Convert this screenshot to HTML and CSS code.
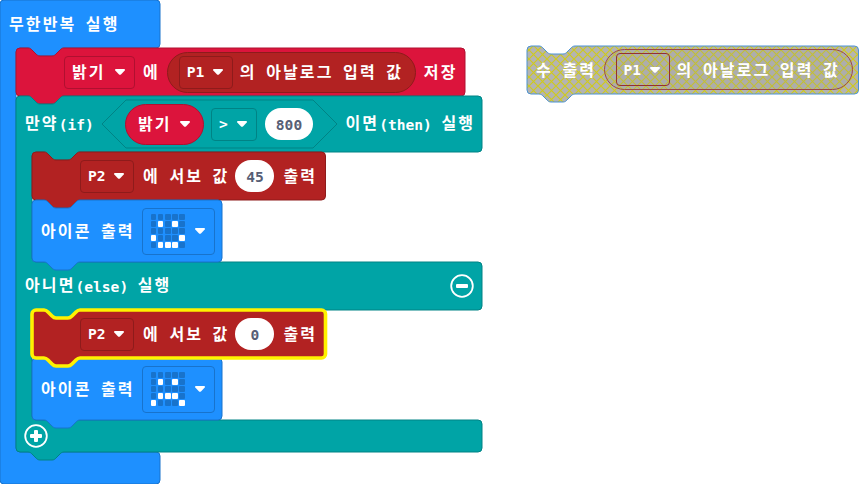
FILE: index.html
```
<!DOCTYPE html>
<html lang="ko">
<head>
<meta charset="utf-8">
<title>블록 편집기</title>
<link rel="stylesheet" href="styles.css">
</head>
<body>
<svg class="defs" width="0" height="0">
  <defs>
    <pattern id="hatch" width="9" height="9" patternUnits="userSpaceOnUse" x="2" y="4">
      <rect width="9" height="9" fill="#b4b4b2"/>
      <path d="M-1 -1L10 10M10 -1L-1 10" stroke="#cfca1c" stroke-width="1.2"/>
    </pattern>
    <symbol id="arrow" viewBox="0 0 12 8"><path d="M1.8 1h8.4q1.400 .2.5 1.500L7.200 6.300q-1.200 1-2.400 0L1.300 2.500Q.4 1.200 1.800 1z" fill="#fff"/></symbol>
  </defs>
</svg>
<main class="workspace">
  <section class="block forever">
    <svg class="shape loop" width="160" height="484"><path d="M0 4A4 4 0 0 1 4 0H156a4 4 0 0 1 4 4V44a4 4 0 0 1-4 4H64c-2 0-3 1-4 2l-4 4c-1 1-2 2-4 2H40c-2 0-3-1-4-2l-4-4c-1-1-2-2-4-2H20a4 4 0 0 0-4 4V448a4 4 0 0 0 4 4H156a4 4 0 0 1 4 4V480a4 4 0 0 1-4 4H4a4 4 0 0 1-4-4z"/></svg>
    <div class="row"><span class="t">무한반복 실행</span></div>
    <div class="stack">

      <div class="block">
        <svg class="shape variable" width="449" height="56"><path d="M0 4A4 4 0 0 1 4 0H12c2 0 3 1 4 2l4 4c1 1 2 2 4 2H36c2 0 3-1 4-2l4-4c1-1 2-2 4-2H445a4 4 0 0 1 4 4V44a4 4 0 0 1-4 4H48c-2 0-3 1-4 2l-4 4c-1 1-2 2-4 2H24c-2 0-3-1-4-2l-4-4c-1-1-2-2-4-2H4a4 4 0 0 1-4-4z"/></svg>
        <div class="row set">
          <span class="field var"><span class="t">밝기</span><svg class="arrow"><use href="#arrow"/></svg></span>
          <span class="t">에</span>
          <span class="reporter pin">
            <span class="field pick"><span class="l">P1</span><svg class="arrow"><use href="#arrow"/></svg></span>
            <span class="t">의 아날로그 입력 값</span>
          </span>
          <span class="t">저장</span>
        </div>
      </div>

      <div class="block">
        <svg class="shape logic" width="467" height="364"><path d="M0 4A4 4 0 0 1 4 0H12c2 0 3 1 4 2l4 4c1 1 2 2 4 2H36c2 0 3-1 4-2l4-4c1-1 2-2 4-2H462a4 4 0 0 1 4 4V52a4 4 0 0 1-4 4H64c-2 0-3 1-4 2l-4 4c-1 1-2 2-4 2H40c-2 0-3-1-4-2l-4-4c-1-1-2-2-4-2H20a4 4 0 0 0-4 4V162a4 4 0 0 0 4 4H462a4 4 0 0 1 4 4V210a4 4 0 0 1-4 4H64c-2 0-3 1-4 2l-4 4c-1 1-2 2-4 2H40c-2 0-3-1-4-2l-4-4c-1-1-2-2-4-2H20a4 4 0 0 0-4 4V320a4 4 0 0 0 4 4H462a4 4 0 0 1 4 4V352a4 4 0 0 1-4 4H48c-2 0-3 1-4 2l-4 4c-1 1-2 2-4 2H24c-2 0-3-1-4-2l-4-4c-1-1-2-2-4-2H4a4 4 0 0 1-4-4z"/></svg>
        <div class="row cond">
          <span class="t">만약<span class="l">(if)</span></span>
          <span class="hexagon">
            <svg class="shape logic" width="235" height="48"><path d="M24 0H211L235 24L211 48H24L0 24z"/></svg>
            <span class="reporter bright"><span class="t">밝기</span><svg class="arrow"><use href="#arrow"/></svg></span>
            <span class="field op"><span class="l">&gt;</span><svg class="arrow"><use href="#arrow"/></svg></span>
            <span class="number wide">800</span>
          </span>
          <span class="t">이면<span class="l">(then)</span> 실행</span>
        </div>
        <div class="stack">
          <div class="block">
            <svg class="shape pins" width="294" height="56"><path d="M0 4A4 4 0 0 1 4 0H12c2 0 3 1 4 2l4 4c1 1 2 2 4 2H36c2 0 3-1 4-2l4-4c1-1 2-2 4-2H289.500a4 4 0 0 1 4 4V44a4 4 0 0 1-4 4H48c-2 0-3 1-4 2l-4 4c-1 1-2 2-4 2H24c-2 0-3-1-4-2l-4-4c-1-1-2-2-4-2H4a4 4 0 0 1-4-4z"/></svg>
            <div class="row servo">
              <span class="field pick"><span class="l">P2</span><svg class="arrow"><use href="#arrow"/></svg></span>
              <span class="t">에 서보 값</span>
              <span class="number">45</span>
              <span class="t">출력</span>
            </div>
          </div>
          <div class="block">
            <svg class="shape loop" width="190" height="70"><path d="M0 4A4 4 0 0 1 4 0H12c2 0 3 1 4 2l4 4c1 1 2 2 4 2H36c2 0 3-1 4-2l4-4c1-1 2-2 4-2H186a4 4 0 0 1 4 4V58a4 4 0 0 1-4 4H48c-2 0-3 1-4 2l-4 4c-1 1-2 2-4 2H24c-2 0-3-1-4-2l-4-4c-1-1-2-2-4-2H4a4 4 0 0 1-4-4z"/></svg>
            <div class="row icon">
              <span class="t">아이콘 출력</span>
              <span class="field leds">
                <span class="grid"><i></i><i></i><i></i><i></i><i></i><i></i><i class="on"></i><i></i><i class="on"></i><i></i><i></i><i></i><i></i><i></i><i></i><i class="on"></i><i></i><i></i><i></i><i class="on"></i><i></i><i class="on"></i><i class="on"></i><i class="on"></i><i></i></span>
                <svg class="arrow"><use href="#arrow"/></svg>
              </span>
            </div>
          </div>
        </div>
        <div class="row else">
          <span class="t">아니면<span class="l">(else)</span> 실행</span>
          <svg class="toggle" viewBox="0 0 24 24"><circle cx="12" cy="12" r="10.800"/><rect x="6" y="10" width="12" height="4" rx="1"/></svg>
        </div>
        <div class="stack">
          <div class="block selected">
            <svg class="shape pins" width="294" height="56"><path d="M0 4A4 4 0 0 1 4 0H12c2 0 3 1 4 2l4 4c1 1 2 2 4 2H36c2 0 3-1 4-2l4-4c1-1 2-2 4-2H289.500a4 4 0 0 1 4 4V44a4 4 0 0 1-4 4H48c-2 0-3 1-4 2l-4 4c-1 1-2 2-4 2H24c-2 0-3-1-4-2l-4-4c-1-1-2-2-4-2H4a4 4 0 0 1-4-4z"/></svg>
            <div class="row servo">
              <span class="field pick"><span class="l">P2</span><svg class="arrow"><use href="#arrow"/></svg></span>
              <span class="t">에 서보 값</span>
              <span class="number">0</span>
              <span class="t">출력</span>
            </div>
          </div>
          <div class="block">
            <svg class="shape loop" width="190" height="70"><path d="M0 4A4 4 0 0 1 4 0H12c2 0 3 1 4 2l4 4c1 1 2 2 4 2H36c2 0 3-1 4-2l4-4c1-1 2-2 4-2H186a4 4 0 0 1 4 4V58a4 4 0 0 1-4 4H48c-2 0-3 1-4 2l-4 4c-1 1-2 2-4 2H24c-2 0-3-1-4-2l-4-4c-1-1-2-2-4-2H4a4 4 0 0 1-4-4z"/></svg>
            <div class="row icon">
              <span class="t">아이콘 출력</span>
              <span class="field leds">
                <span class="grid"><i></i><i></i><i></i><i></i><i></i><i></i><i class="on"></i><i></i><i class="on"></i><i></i><i></i><i></i><i></i><i></i><i></i><i></i><i class="on"></i><i class="on"></i><i class="on"></i><i></i><i class="on"></i><i></i><i></i><i></i><i class="on"></i></span>
                <svg class="arrow"><use href="#arrow"/></svg>
              </span>
            </div>
          </div>
        </div>
        <div class="row foot">
          <svg class="toggle" viewBox="0 0 24 24"><circle cx="12" cy="12" r="10.800"/><path d="M11 6h2q1 0 1 1v3h3q1 0 1 1v2q0 1-1 1h-3v3q0 1-1 1h-2q-1 0-1-1v-3h-3q-1 0-1-1v-2q0-1 1-1h3v-3q0-1 1-1z"/></svg>
        </div>
      </div>
    </div>
  </section>

  <section class="block orphan">
    <svg class="shape disabled" width="332" height="56"><path d="M0 4A4 4 0 0 1 4 0H12c2 0 3 1 4 2l4 4c1 1 2 2 4 2H36c2 0 3-1 4-2l4-4c1-1 2-2 4-2H327.500a4 4 0 0 1 4 4V44a4 4 0 0 1-4 4H48c-2 0-3 1-4 2l-4 4c-1 1-2 2-4 2H24c-2 0-3-1-4-2l-4-4c-1-1-2-2-4-2H4a4 4 0 0 1-4-4z"/></svg>
    <div class="row off">
      <span class="t">수 출력</span>
      <span class="reporter pin ghost">
        <span class="field pick"><span class="l">P1</span><svg class="arrow"><use href="#arrow"/></svg></span>
        <span class="t">의 아날로그 입력 값</span>
      </span>
    </div>
  </section>
</main>
</body>
</html>
```
FILE: styles.css
```
* { box-sizing: border-box; }
body {
  margin: 0;
  background: #fff;
  color: #fff;
  font: bold 16px/20px "Noto Sans CJK KR", sans-serif;
}
.defs { position: absolute; }
.workspace { position: relative; width: 859px; height: 484px; overflow: hidden; }
.block { position: relative; }
.forever { width: 160px; }
.orphan { position: absolute; left: 527px; top: 45.5px; }
.stack { margin-left: 16px; }

.shape { position: absolute; left: 0; top: 0; overflow: visible; stroke-width: 1; }
.loop { fill: #1e90ff; stroke: #1873cc; }
.variable { fill: #dc143c; stroke: #b01030; }
.logic { fill: #00a4a6; stroke: #008385; }
.pins { fill: #b22222; stroke: #8e1b1b; }
.selected { z-index: 1; }
.selected .shape { stroke: #fff200; stroke-width: 3.6; }
.disabled { fill: url(#hatch); stroke: #4b92d4; }

.row {
  position: relative;
  display: flex;
  align-items: center;
  width: max-content;
  height: 48px;
  padding-left: 9px;
  white-space: nowrap;
}
.t { padding-bottom: 2px; letter-spacing: 2.1px; word-spacing: 3px; }
.l {
  font: bold 14.6px/20px "DejaVu Sans Mono", monospace;
  letter-spacing: 0;
  word-spacing: 0;
}
.field {
  display: flex;
  align-items: center;
  justify-content: space-between;
  height: 33px;
  border: 1px solid #8e1b1b;
  border-radius: 4px;
  padding: 0 8px 0 7px;
}
.arrow { width: 12px; height: 8px; flex: none; }
.pick { width: 54px; }
.var { width: 71px; border-color: #b01030; }

.set { padding-left: 48px; }
.set > .var { margin-right: 8px; }
.reporter {
  display: flex;
  align-items: center;
  height: 41px;
  border: 1px solid #8e1b1b;
  border-radius: 21px;
}
.pin { width: 249px; margin: 0 8px 0 7px; padding-left: 11px; background: #b22222; }
.pin > .pick { margin-right: 7px; }

.cond { height: 56px; }
.cond > .t:first-child { width: 77px; }
.cond .t .l, .else .l { position: relative; top: 1px; }
.hexagon {
  position: relative;
  display: flex;
  align-items: center;
  width: 235px;
  height: 48px;
  margin-right: 9px;
  margin-left: -.5px;
  padding-left: 23.5px;
}
.bright {
  position: relative;
  width: 79px;
  padding: 0 12px;
  justify-content: space-between;
  background: #dc143c;
  border-color: #b01030;
}
.op { position: relative; width: 46px; margin: 0 8px 0 7px; border-color: #008385; }
.number {
  position: relative;
  width: 39px;
  height: 32px;
  border-radius: 16px;
  background: #fff;
  color: #575e75;
  font: bold 14.6px/34px "DejaVu Sans Mono", monospace;
  text-align: center;
}
.wide { width: 48px; }

.servo { padding-left: 48px; }
.servo > .pick { margin-right: 9px; }
.servo > .number { margin: 0 9px 0 6px; }

.icon { height: 62px; }
.icon > .t { width: 100.5px; }
.leds { width: 73px; height: 47px; border-color: #1873cc; padding: 0 7.5px 0 8px; }
.grid { display: grid; grid-template-columns: repeat(5, 5.800px); grid-auto-rows: 5.800px; gap: 1.400px; }
.grid i { background: #1873cc; border-radius: 1px; }
.grid .on { background: #fff; }

.else { width: 466px; justify-content: space-between; padding-right: 8px; }
.toggle { width: 24px; height: 24px; margin-top: -1px; fill: none; stroke: #fff; stroke-width: 1.800; }
.toggle path, .toggle rect { fill: #fff; stroke: none; }
.foot { height: 32px; padding-left: 8px; }

.off > .ghost { margin: 0 0 0 7.5px; background: rgba(150, 150, 150, .22); border-color: #9d4848; }
.ghost .field { border-color: #963030; }
```
